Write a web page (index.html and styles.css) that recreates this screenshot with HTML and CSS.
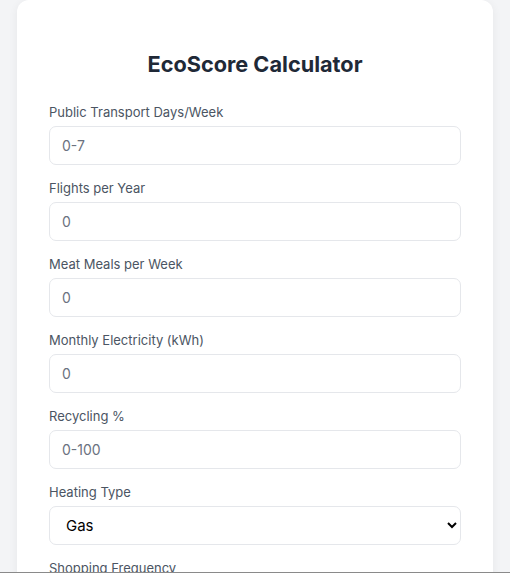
FILE: index.html
```html
<!DOCTYPE html>
<html lang="en">
<head>
    <meta charset="UTF-8">
    <meta name="viewport" content="width=device-width, initial-scale=1.0">
    <title>EcoScore Calculator</title>
    <link rel="stylesheet" href="styles.css">
</head>
<body>
    <div class="card">
        <h1>EcoScore Calculator</h1>
        <form id="eco-form">
            <div class="form-group">
                <label for="transport">Public Transport Days/Week</label>
                <input type="number" id="transport" placeholder="0-7">
            </div>
            <div class="form-group">
                <label for="flights">Flights per Year</label>
                <input type="number" id="flights" placeholder="0">
            </div>
            <div class="form-group">
                <label for="meat">Meat Meals per Week</label>
                <input type="number" id="meat" placeholder="0">
            </div>
            <div class="form-group">
                <label for="electricity">Monthly Electricity (kWh)</label>
                <input type="number" id="electricity" placeholder="0">
            </div>
            <div class="form-group">
                <label for="recycling">Recycling %</label>
                <input type="number" id="recycling" placeholder="0-100">
            </div>
            <div class="form-group">
                <label for="heating">Heating Type</label>
                <select id="heating">
                    <option>Gas</option>
                    <option>Electric</option>
                    <option>Oil</option>
                    <option>Heat Pump</option>
                </select>
            </div>
            <div class="form-group">
                <label for="shopping">Shopping Frequency</label>
                <select id="shopping">
                    <option>Weekly</option>
                    <option>Monthly</option>
                </select>
            </div>
        </form>
    </div>
    <div class="window-edge"></div>
</body>
</html>
```

FILE: styles.css
```css
/* Global */
body {
    margin: 0;
    padding: 0;
    font-family: 'Inter', sans-serif;
    background-color: #f3f4f6;
    color: #1f2937;
}

/* Card */
.card {
    background-color: #ffffff;
    width: 476px;
    margin: 0 auto;
    padding: 32px;
    box-sizing: border-box;
    border-radius: 12px;
    box-shadow: 0 2px 10px rgba(0, 0, 0, 0.06);
}

h1 {
    font-size: 21.7px;
    line-height: 28px;
    font-weight: 700;
    color: #1f2937;
    text-align: center;
    margin: 18px 0 26px;
}

/* Form */
.form-group {
    margin-bottom: 15px;
}

label {
    display: block;
    font-size: 13px;
    line-height: 16px;
    color: #4b5563;
    margin-bottom: 6px;
}

input,
select {
    width: 100%;
    height: 39px;
    padding: 0 12px;
    border: 1px solid #e5e7eb;
    border-radius: 7px;
    font-family: 'Inter', sans-serif;
    font-size: 14px;
    color: #111827;
    background-color: #ffffff;
    box-sizing: border-box;
}

input::placeholder {
    color: #6b7280;
}

select {
    padding: 0 8px 0 12px;
    font-size: 15px;
    color: #000000;
}

/* Bottom edge of the window */
.window-edge {
    position: fixed;
    left: 0;
    right: 0;
    bottom: 0;
    height: 1px;
    background-color: #8a8a8a;
}
```
